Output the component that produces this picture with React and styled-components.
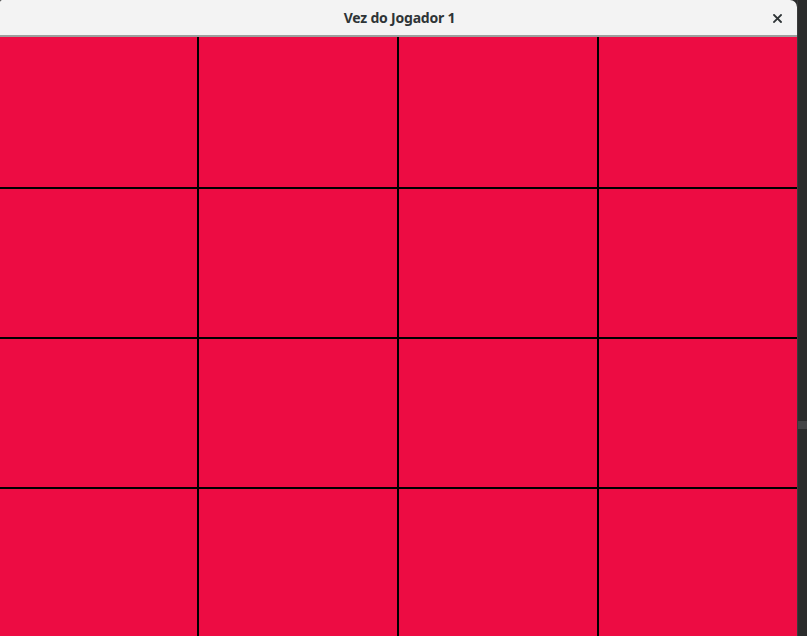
import styled, { createGlobalStyle } from 'styled-components';

const Global = createGlobalStyle`
    html, body {
        margin: 0;
        padding: 0;
        background: #2b2c2c;
        overflow: hidden;
    }
`;

export default function App() {
    const cells = Array.from({ length: 16 }, (_, i) => i);

    return (
        <Desktop>
            <Global />
            <Window>
                <TitleBar>
                    <Title>Vez do Jogador 1</Title>
                    <Close>
                        <svg width="9" height="9" viewBox="0 0 9 9">
                            <path d="M1 1 L8 8 M8 1 L1 8" stroke="#2e3436" strokeWidth="1.8" strokeLinecap="square" />
                        </svg>
                    </Close>
                </TitleBar>
                <Board>
                    {cells.map((c) => <Cell key={c} />)}
                </Board>
            </Window>
            <Edge>
                <Band />
            </Edge>
        </Desktop>
    );
}

const Desktop = styled.div`
    display: flex;
    width: 807px;
    height: 636px;
`;

const Window = styled.div`
    width: 797px;
    height: 636px;
    display: flex;
    flex-direction: column;
    background: #000;
    border-top-right-radius: 7px;
    border-top-left-radius: 2px;
    overflow: hidden;
`;

const TitleBar = styled.div`
    height: 35px;
    flex: none;
    background: #f3f3f3;
    border-bottom: 2px solid #9d9f9e;
    box-sizing: content-box;
    display: flex;
    align-items: center;
    justify-content: center;
    position: relative;
`;

const Title = styled.div`
    font-family: 'Noto Sans', 'DejaVu Sans', sans-serif;
    font-weight: 700;
    font-size: 14px;
    color: #2e3436;
    letter-spacing: -0.2px;
    margin-left: 2px;
`;

const Close = styled.div`
    position: absolute;
    right: 15px;
    top: 14px;
    width: 9px;
    height: 9px;
    display: flex;
`;

const Board = styled.div`
    flex: 1;
    display: grid;
    grid-template-columns: 197px 198px 198px 198px;
    grid-template-rows: 150px 148px 148px 1fr;
    gap: 2px;
    background: #000;
`;

const Cell = styled.div`
    background: #ed0c43;
`;

const Edge = styled.div`
    flex: 1;
    background: #2b2c2c;
    border-left: 1px solid #3a3b3b;
    display: flex;
    flex-direction: column;
    padding-top: 421px;
`;

const Band = styled.div`
    height: 8px;
    background: #444546;
`;
